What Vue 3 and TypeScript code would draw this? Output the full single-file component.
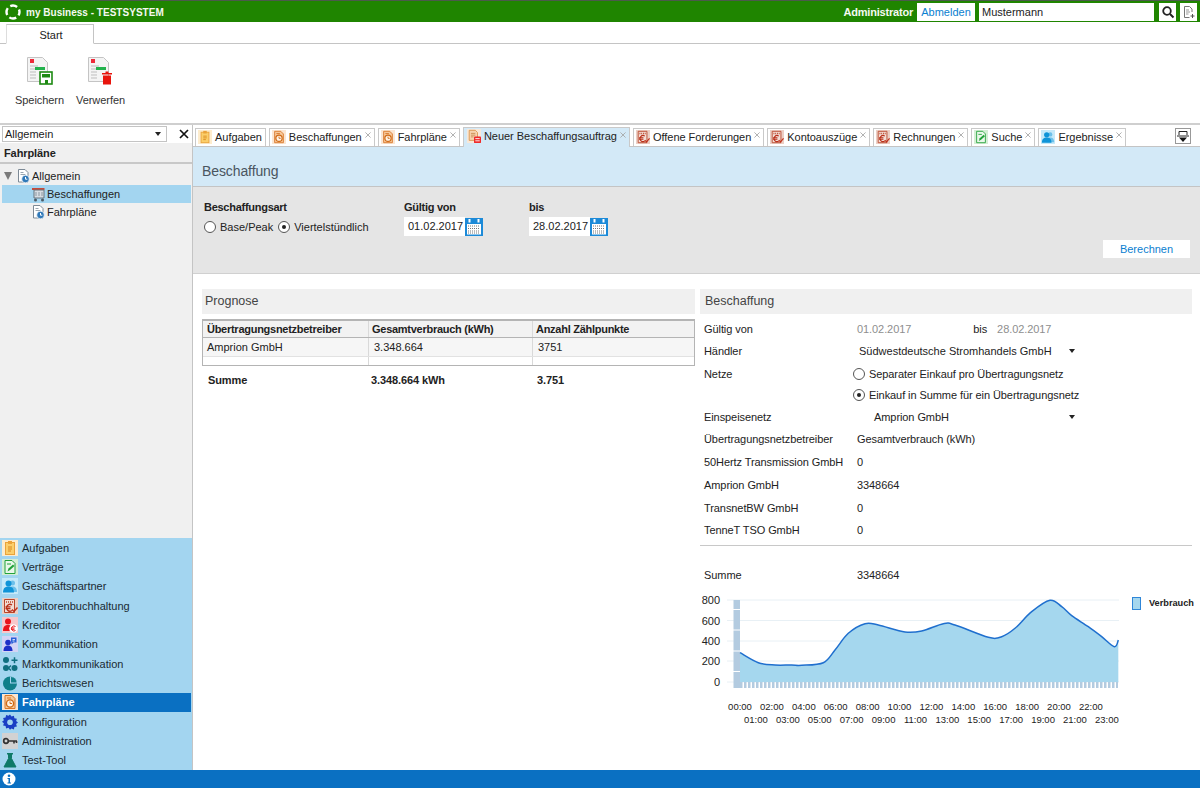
<script setup lang="ts">
const icons: Record<string, string> = {
  task: '<rect width="16" height="16" fill="#fdeccd"/><rect x="3.5" y="2.5" width="9" height="12" fill="#fbcf6b" stroke="#e9a33a"/><rect x="6" y="1" width="4" height="3" fill="#e9a33a"/><path d="M6 7h4M6 9h4M6 11h3" stroke="#d98a1e" fill="none"/>',
  sched: '<rect width="16" height="16" fill="#fbe6d2"/><path d="M3 1.500h7l3 3v10H3z" fill="#f6c89a" stroke="#d9782a"/><circle cx="8" cy="9.500" r="3.600" fill="#fff3e5" stroke="#d06a16" stroke-width="1.400"/><path d="M8 7.500v2h2" stroke="#d06a16" fill="none"/><path d="M5 4h4" stroke="#d9782a"/>',
  neworder: '<rect width="16" height="16" fill="#f8e8d8"/><path d="M2.500 1.500h7l2.500 2.500v9h-9.500z" fill="#f7d3ae" stroke="#d9964f"/><path d="M4.500 5h5M4.500 7h5M4.500 9h3" stroke="#c98a50"/><rect x="8" y="8.500" width="8" height="7.500" rx="1" fill="#ee2a2a"/><path d="M9.500 11h5M9.500 13.500h5" stroke="#fff"/>',
  debit: '<rect width="16" height="16" fill="#eccfc5"/><path d="M2.500 1.500h10v13h-10z" fill="#f3ddd5" stroke="#b9462a"/><path d="M4 4h7" stroke="#b9462a" stroke-width="1.500" stroke-dasharray="1 1"/><path d="M10 7a3.400 3.400 0 1 0 0 5.500M3.500 8.800h5M3.500 10.600h5" stroke="#b9301a" stroke-width="1.300" fill="none"/><path d="M10 11.500l2 2 3.500-4" stroke="#c0301a" stroke-width="1.400" fill="none"/>',
  contract: '<rect width="16" height="16" fill="#d4eed4"/><path d="M3 1.500h7l3 3v10H3z" fill="#eaf7ea" stroke="#23a23a"/><path d="M5 5h4" stroke="#23a23a"/><path d="M5.500 12.500l1-3 4.500-4 1.500 1.500-4.500 4z" fill="#23a23a"/>',
  people: '<rect width="16" height="16" fill="#c5e9f9"/><circle cx="10.500" cy="5" r="2.500" fill="#6cc0ea"/><path d="M6 14c0-4 2-5.500 4.500-5.500S15 10 15 14z" fill="#6cc0ea"/><circle cx="6.500" cy="5.500" r="3" fill="#0f94d8"/><path d="M1 14.500c0-4.500 2.500-6 5.500-6s5.500 1.500 5.500 6z" fill="#0f94d8"/>',
  kred: '<rect width="16" height="16" fill="#f7c7cb"/><circle cx="6" cy="4.500" r="3" fill="#e8141c"/><path d="M1 14c0-4.500 2-6 5-6s5 1.500 5 6z" fill="#e8141c"/><circle cx="11.500" cy="11.500" r="4.300" fill="#fff"/><path d="M13.500 9.500a2.500 2.500 0 1 0 0 4M9 11h3.500M9 12.300h3.500" stroke="#e8141c" fill="none"/>',
  komm: '<rect width="16" height="16" fill="#d3d3f5"/><circle cx="6" cy="6.500" r="2.800" fill="#1c2fc8"/><path d="M1.500 15c0-4 2-5.500 4.500-5.500s4.500 1.500 4.500 5.500z" fill="#1c2fc8"/><path d="M9 1.500h5.500v5h-3l-2 2v-2H9z" fill="#2a60d8"/><path d="M10.500 3.500h2.500M10.500 5h2" stroke="#fff" stroke-width=".8"/>',
  markt: '<circle cx="4" cy="4" r="3" fill="#0f6f80"/><circle cx="4" cy="12" r="3" fill="#0f6f80"/><circle cx="12.500" cy="12" r="3" fill="#0f6f80"/><path d="M9.500 4.200h6M12.500 1.200v6M9 9.500L6.500 12l2.500 2.500" stroke="#0f6f80" stroke-width="1.500" fill="none"/>',
  report: '<circle cx="8" cy="8.500" r="7" fill="#0f7f8a"/><path d="M8 8.500V1.500A7 7 0 0 1 15 8.500z" fill="#a3d5f0"/><path d="M9 7.500V2a6 6 0 0 1 5.500 5.500z" fill="#0f7f8a"/>',
  conf: '<path d="M8 .5l1.500 2 2.400-.8.500 2.500 2.500.5-.8 2.400 2 1.400-2 1.500.8 2.400-2.500.5-.5 2.500-2.400-.8L8 15.800l-1.500-2-2.400.8-.5-2.500-2.500-.5.800-2.400-2-1.500 2-1.400-.8-2.400 2.500-.5.500-2.500 2.400.8z" fill="#1a3fc4"/><circle cx="8" cy="8.200" r="2.800" fill="#a3d5f0"/>',
  key: '<rect width="16" height="16" fill="#d2d2d2"/><circle cx="4" cy="8" r="2.300" fill="none" stroke="#333" stroke-width="1.700"/><path d="M6.500 8H15M12 8v2.500M14.500 8v2" stroke="#333" stroke-width="1.600" fill="none"/>',
  flask: '<path d="M5.500 1.500h5M6.500 1.500v5L2 15h12L9.500 6.500v-5z" fill="#0f7a68" stroke="#0f7a68"/><rect x="5" y="1" width="6" height="1.500" fill="#0f7a68"/>',
  treeDoc: '<path d="M2.500 1.500h6.500l3 3v9.500H2.500z" fill="#fff" stroke="#7d8a96"/><path d="M4.500 4.500h3M4.500 6.500h5" stroke="#9aa6b0"/><circle cx="9.500" cy="11" r="3.800" fill="#2f78b8" stroke="#fff" stroke-width=".7"/><path d="M9.500 9v2.200h1.800" stroke="#fff" fill="none"/>',
  treeCart: '<path d="M1 2h12.500v2H1z" fill="#c64a3a"/><path d="M3 4h10v8H3z" fill="#d7dde3" stroke="#69757f"/><path d="M5 6v4M8 6v4M11 6v4" stroke="#8b97a1"/><circle cx="4.500" cy="14" r="1.500" fill="#4d5963"/><circle cx="11.500" cy="14" r="1.500" fill="#4d5963"/>'
}

const tabs = [
  { label: 'Aufgaben', icon: 'task', close: false },
  { label: 'Beschaffungen', icon: 'sched', close: true },
  { label: 'Fahrpläne', icon: 'sched', close: true },
  { label: 'Neuer Beschaffungsauftrag', icon: 'neworder', close: true, active: true },
  { label: 'Offene Forderungen', icon: 'debit', close: true },
  { label: 'Kontoauszüge', icon: 'debit', close: true },
  { label: 'Rechnungen', icon: 'debit', close: true },
  { label: 'Suche', icon: 'contract', close: true },
  { label: 'Ergebnisse', icon: 'people', close: true }
]

const nav = [
  { label: 'Aufgaben', icon: 'task' },
  { label: 'Verträge', icon: 'contract' },
  { label: 'Geschäftspartner', icon: 'people' },
  { label: 'Debitorenbuchhaltung', icon: 'debit' },
  { label: 'Kreditor', icon: 'kred' },
  { label: 'Kommunikation', icon: 'komm' },
  { label: 'Marktkommunikation', icon: 'markt' },
  { label: 'Berichtswesen', icon: 'report' },
  { label: 'Fahrpläne', icon: 'sched', active: true },
  { label: 'Konfiguration', icon: 'conf' },
  { label: 'Administration', icon: 'key' },
  { label: 'Test-Tool', icon: 'flask' }
]

const grid = [
  { name: '50Hertz Transmission GmbH', val: '0' },
  { name: 'Amprion GmbH', val: '3348664' },
  { name: 'TransnetBW GmbH', val: '0' },
  { name: 'TenneT TSO GmbH', val: '0' }
]

// Curve points in pixels of the chart's own drawing area (page offset 695,585).
const raw: [number, number][] = [
  [135, 203], [190, 233], [240, 240], [290, 240], [320, 241], [385, 233], [420, 195], [460, 145],
  [510, 116], [550, 120], [630, 141], [680, 138], [745, 116], [780, 120], [880, 157], [920, 155],
  [960, 130], [1010, 80], [1065, 46], [1100, 65], [1130, 92], [1180, 125], [1220, 155], [1258, 185], [1270, 165]
]
const pts = raw.map(([x, y]) => [x / 3, y / 3])

function smooth(p: number[][]): string {
  let d = `M${p[0][0]} ${p[0][1]}`
  for (let i = 0; i < p.length - 1; i++) {
    const a = p[Math.max(i - 1, 0)]
    const b = p[i]
    const c = p[i + 1]
    const e = p[Math.min(i + 2, p.length - 1)]
    d += ` C${(b[0] + (c[0] - a[0]) / 6).toFixed(1)} ${(b[1] + (c[1] - a[1]) / 6).toFixed(1)} ${(c[0] - (e[0] - b[0]) / 6).toFixed(1)} ${(c[1] - (e[1] - b[1]) / 6).toFixed(1)} ${c[0].toFixed(1)} ${c[1].toFixed(1)}`
  }
  return d
}
const linePath = smooth(pts)
const areaPath = `${linePath} L${pts[pts.length - 1][0]} 97 L45 97 Z`
const yLabels = [
  { t: '800', y: 15 }, { t: '600', y: 35.5 }, { t: '400', y: 56 }, { t: '200', y: 76 }, { t: '0', y: 97 }
]
const hours = Array.from({ length: 24 }, (_, i) => ({
  t: `${String(i).padStart(2, '0')}:00`,
  x: 45 + i * 15.95,
  y: i % 2 === 0 ? 124.5 : 137.5
}))
</script>

<template>
  <div class="app">
    <header class="top">
      <svg class="logo" viewBox="0 0 16 16">
        <circle cx="8" cy="8" r="6.500" fill="none" stroke="#fff" stroke-width="2.400" stroke-dasharray="7.200 3" stroke-dashoffset="3.600" />
      </svg>
      <span class="brand">my Business - TESTSYSTEM</span>
      <span class="spacer"></span>
      <span class="user">Administrator</span>
      <span class="logout">Abmelden</span>
      <span class="search">Mustermann</span>
      <span class="sq">
        <svg viewBox="0 0 14 14" width="14" height="14"><circle cx="6" cy="6" r="3.800" fill="none" stroke="#222" stroke-width="1.800" /><path d="M9 9l3.500 3.500" stroke="#222" stroke-width="2" /></svg>
      </span>
      <span class="sq">
        <svg viewBox="0 0 14 14" width="14" height="14"><path d="M2.500 1.500h5l2.500 2.500v3M2.500 1.500v11h5" fill="none" stroke="#777" /><path d="M4 5h3M4 7h4M4 9h2.500" stroke="#999" /><path d="M10.500 9v4M8.500 11h4" stroke="#555" /></svg>
      </span>
    </header>

    <div class="tabbar"><div class="start">Start</div></div>

    <div class="ribbon">
      <div class="rbtn">
        <svg class="rico" viewBox="0 0 30 30">
          <path d="M2.500 1.500h15l5 5v19h-20z" fill="#f4f4f4" stroke="#c4c4c4" />
          <rect x="5" y="3" width="4" height="4" fill="#ee2a3a" />
          <path d="M5 10h8M5 13h7M5 16h6M5 19h6M5 22h6" stroke="#bdbdbd" />
          <rect x="10" y="11" width="10" height="3" fill="#22b24c" />
          <rect x="15" y="16" width="12" height="12" fill="#fff" stroke="#1d8a12" stroke-width="1.600" />
          <rect x="17" y="18" width="8" height="3.500" fill="#1d8a12" />
          <rect x="20" y="24" width="3" height="4" fill="#1d8a12" />
        </svg>
        <span>Speichern</span>
      </div>
      <div class="rbtn">
        <svg class="rico" viewBox="0 0 30 30">
          <path d="M2.500 1.500h15l5 5v19h-20z" fill="#f4f4f4" stroke="#c4c4c4" />
          <rect x="5" y="3" width="4" height="4" fill="#ee2a3a" />
          <path d="M5 10h8M5 13h7M5 16h6M5 19h6M5 22h6" stroke="#bdbdbd" />
          <rect x="10" y="11" width="10" height="3" fill="#22b24c" />
          <rect x="16" y="17" width="10" height="1.500" fill="#e8140c" />
          <rect x="19.500" y="15.500" width="3" height="1.500" fill="#e8140c" />
          <rect x="17" y="19.500" width="8" height="9" fill="#e8140c" />
        </svg>
        <span>Verwerfen</span>
      </div>
    </div>

    <div class="main">
      <aside class="side">
        <div class="sidetop">
          <div class="combo"><span>Allgemein</span><i class="caret"></i></div>
          <svg class="x" viewBox="0 0 10 10" width="10" height="10"><path d="M1 1l8 8M9 1l-8 8" stroke="#111" stroke-width="1.700" /></svg>
        </div>
        <div class="sidehead">Fahrpläne</div>
        <div class="tree">
          <div class="node">
            <i class="tri"></i>
            <svg class="ic tree15" viewBox="0 0 16 16" v-html="icons.treeDoc"></svg>
            <span>Allgemein</span>
          </div>
          <div class="node sub sel">
            <svg class="ic" viewBox="0 0 16 16" v-html="icons.treeCart"></svg>
            <span>Beschaffungen</span>
          </div>
          <div class="node sub">
            <svg class="ic" viewBox="0 0 16 16" v-html="icons.treeDoc"></svg>
            <span>Fahrpläne</span>
          </div>
        </div>
        <nav class="nav">
          <div v-for="n in nav" :key="n.label" class="navrow" :class="{ on: n.active }">
            <svg class="ic" viewBox="0 0 16 16" v-html="icons[n.icon]"></svg>
            <span>{{ n.label }}</span>
          </div>
        </nav>
      </aside>

      <section class="work">
        <div class="tabs">
          <div v-for="t in tabs" :key="t.label" class="tab" :class="{ act: t.active, noclose: !t.close }">
            <svg class="tic" viewBox="0 0 16 16" v-html="icons[t.icon]"></svg>
            <span>{{ t.label }}</span>
            <svg v-if="t.close" class="tx" viewBox="0 0 7 7" width="6" height="6"><path d="M.5.500l6 6M6.500.500l-6 6" stroke="#a5a5a5" /></svg>
          </div>
          <span class="spacer"></span>
          <span class="tabmenu">
            <svg viewBox="0 0 14 15" width="14" height="15"><path d="M3 6V2.500h8V6M1 7h12" fill="none" stroke="#222" /><path d="M3 8.500h8L7 13z" fill="#111" /></svg>
          </span>
        </div>

        <div class="page">
          <h1 class="title">Beschaffung</h1>
          <div class="filter">
            <div class="fgrid">
              <div>
                <div class="flabel">Beschaffungsart</div>
                <div class="radios">
                  <i class="radio"></i><span class="r1">Base/Peak</span>
                  <i class="radio on"></i><span>Viertelstündlich</span>
                </div>
              </div>
              <div>
                <div class="flabel">Gültig von</div>
                <div class="date">
                  <span class="dinput">01.02.2017</span>
                  <svg class="cal" viewBox="0 0 18 18" width="18" height="18"><rect width="18" height="18" fill="#1c8ad8" /><rect x="2" y="6" width="14" height="10.500" fill="#fff" /><rect x="3.500" y="1" width="2" height="3.500" fill="#fff" /><rect x="12.500" y="1" width="2" height="3.500" fill="#fff" /><path d="M3 8h12M3 10.500h12M3 13h12M3 15h12" stroke="#777" stroke-dasharray="1 1" /></svg>
                </div>
              </div>
              <div>
                <div class="flabel">bis</div>
                <div class="date">
                  <span class="dinput">28.02.2017</span>
                  <svg class="cal" viewBox="0 0 18 18" width="18" height="18"><rect width="18" height="18" fill="#1c8ad8" /><rect x="2" y="6" width="14" height="10.500" fill="#fff" /><rect x="3.500" y="1" width="2" height="3.500" fill="#fff" /><rect x="12.500" y="1" width="2" height="3.500" fill="#fff" /><path d="M3 8h12M3 10.500h12M3 13h12M3 15h12" stroke="#777" stroke-dasharray="1 1" /></svg>
                </div>
              </div>
            </div>
            <div class="actions"><span class="calc">Berechnen</span></div>
          </div>

          <div class="cols">
            <div class="left">
              <h2 class="sect">Prognose</h2>
              <div class="table">
                <div class="tr th"><span class="first">Übertragungsnetzbetreiber</span><span>Gesamtverbrauch (kWh)</span><span>Anzahl Zählpunkte</span></div>
                <div class="tr td"><span class="first">Amprion GmbH</span><span class="in">3.348.664</span><span class="in">3751</span></div>
                <div class="tr empty"><span></span><span></span><span></span></div>
              </div>
              <div class="tr sum"><span class="in2">Summe</span><span>3.348.664 kWh</span><span class="in">3.751</span></div>
            </div>

            <div class="right">
              <h2 class="sect">Beschaffung</h2>
              <div class="form rows">
                <span>Gültig von</span>
                <span class="dates"><em class="grey">01.02.2017</em><span class="bis">bis</span><em class="grey">28.02.2017</em></span>
                <span>Händler</span>
                <span class="sel1">Südwestdeutsche Stromhandels GmbH<i class="caret a"></i></span>
                <span>Netze</span>
                <span class="opt"><i class="radio"></i>Separater Einkauf pro Übertragungsnetz</span>
                <span></span>
                <span class="opt"><i class="radio on"></i>Einkauf in Summe für ein Übertragungsnetz</span>
                <span>Einspeisenetz</span>
                <span class="sel2">Amprion GmbH<i class="caret b"></i></span>
                <span>Übertragungsnetzbetreiber</span>
                <span>Gesamtverbrauch (kWh)</span>
                <template v-for="g in grid" :key="g.name">
                  <span>{{ g.name }}</span>
                  <span>{{ g.val }}</span>
                </template>
              </div>
              <div class="rule"></div>
              <div class="form total"><span>Summe</span><span>3348664</span></div>
              <svg class="chart" viewBox="0 0 505 150" width="505" height="150">
                <defs>
                  <pattern id="ticks" x="45" width="4" height="6" patternUnits="userSpaceOnUse"><rect width="2.500" height="6" fill="#b3cbe0" /></pattern>
                </defs>
                <path v-for="l in yLabels" :key="'g' + l.t" :d="`M32 ${l.y}H424`" stroke="#e8f0f5" />
                <rect x="38.500" y="15" width="6.500" height="88" fill="#b3cbe0" />
                <path d="M38 24.500h8M38 45h8M38 66h8M38 86.500h8" stroke="#fff" />
                <rect x="45" y="97" width="378" height="6" fill="url(#ticks)" />
                <path :d="areaPath" fill="#a5d7ee" />
                <path :d="linePath" fill="none" stroke="#1f6fce" stroke-width="1.500" />
                <text v-for="l in yLabels" :key="l.t" x="25" :y="l.y + 4" text-anchor="end" class="yl">{{ l.t }}</text>
                <text v-for="h in hours" :key="h.t" :x="h.x" :y="h.y" text-anchor="middle" class="xl">{{ h.t }}</text>
                <rect x="437.500" y="12.500" width="8" height="12" fill="#a5d7ee" stroke="#2f86d8" />
                <text x="454" y="21" class="lg">Verbrauch</text>
              </svg>
            </div>
          </div>
        </div>
      </section>
    </div>

    <footer class="foot">
      <svg viewBox="0 0 14 14" width="14" height="14"><circle cx="7" cy="7" r="6.500" fill="#fff" /><circle cx="7" cy="3.700" r="1.300" fill="#0a70c2" /><path d="M5.500 6h2.500v4.500h1v1H5.500v-1h1V7h-1z" fill="#0a70c2" /></svg>
    </footer>
  </div>
</template>

<style scoped>
.app { width: 1200px; height: 788px; display: flex; flex-direction: column; overflow: hidden; background: #fff; font: 11px "Liberation Sans", Arial, sans-serif; color: #222; }
.top { height: 22px; box-sizing: border-box; background: #1f8500; border-top: 1px solid #4b5a4b; display: flex; align-items: center; padding: 1px 3px 0 5px; flex: none; gap: 4px; }
.logo { width: 16px; height: 16px; margin-right: 1px; }
.brand { color: #f5f9f1; font-weight: bold; font-size: 10px; letter-spacing: .02px; }
.spacer { flex: 1; }
.user { color: #f5f9f1; font-weight: bold; letter-spacing: -.2px; }
.logout { background: #fff; color: #0a80d0; height: 18px; width: 58px; line-height: 18px; text-align: center; }
.search { background: #fff; width: 175px; height: 18px; line-height: 18px; padding-left: 3px; box-sizing: border-box; margin-right: 1px; }
.sq { background: #fff; width: 17px; height: 18px; display: flex; align-items: center; justify-content: center; }
.tabbar { height: 22px; box-sizing: border-box; border-bottom: 1px solid #c4c4c4; padding: 2px 0 0 6px; flex: none; }
.start { width: 88px; height: 20px; box-sizing: border-box; border: 1px solid #c4c4c4; border-bottom: 1px solid #fff; border-left-color: #ddd; text-align: center; line-height: 20px; font-size: 11px; background: #fff; padding-left: 2px; }
.ribbon { height: 81px; box-sizing: border-box; border-bottom: 2px solid #cfcfcf; display: flex; padding: 12px 0 0 15px; gap: 12px; flex: none; }
.rbtn { width: 49px; display: flex; flex-direction: column; align-items: center; font-size: 11px; color: #333; gap: 8px; white-space: nowrap; letter-spacing: -.05px; }
.rico { width: 30px; height: 30px; }
.main { flex: 1; display: flex; min-height: 0; }
.side { width: 193px; flex: none; display: flex; flex-direction: column; background: #f0f0f0; border-right: 1px solid #c4c4c4; box-sizing: border-box; }
.sidetop { height: 18px; background: #fff; display: flex; align-items: center; padding: 0 0 0 1px; box-sizing: border-box; flex: none; }
.combo { width: 165px; height: 16px; box-sizing: border-box; border: 1px solid #c4c4c4; background: #fff; display: flex; align-items: center; justify-content: space-between; padding: 0 5px 0 2px; margin-left: 1px; }
.caret { width: 0; height: 0; border-left: 3.500px solid transparent; border-right: 3.500px solid transparent; border-top: 4px solid #222; display: inline-block; }
.x { margin-left: 12px; }
.sidehead { height: 21px; box-sizing: border-box; line-height: 20px; font-weight: bold; padding-left: 4px; border-bottom: 2px solid #c8c8c8; flex: none; letter-spacing: -.1px; }
.tree { flex: 1; padding: 3px 1px 0 2px; }
.node { height: 18px; display: flex; align-items: center; white-space: nowrap; }
.tri { width: 0; height: 0; border-left: 4px solid transparent; border-right: 4px solid transparent; border-top: 8px solid #7b7b7b; margin: 0 4px 0 2px; }
.tree15 { width: 15px; }
.sub { padding-left: 29px; }
.sel { background: #a3d5f0; }
.ic { width: 16px; height: 16px; flex: none; }
.tic { width: 14px; height: 14px; flex: none; }
.nav { height: 232px; background: #a3d5f0; display: grid; grid-auto-rows: 1fr; padding-right: 1px; flex: none; }
.navrow { display: flex; align-items: center; padding-left: 2px; gap: 4px; color: #1a2a33; }
.navrow.on { background: #0a70c2; color: #fff; font-weight: bold; }
.work { flex: 1; min-width: 0; display: flex; flex-direction: column; }
.tabs { height: 22px; box-sizing: border-box; display: flex; align-items: flex-end; padding-left: 2px; gap: 3px; border-bottom: 1px solid #c4c4c4; flex: none; padding-right: 9px; }
.tab { height: 18px; box-sizing: border-box; border: 1px solid #c9c9c9; border-bottom: none; display: flex; align-items: center; padding: 0 3px 2px 2px; gap: 3px; white-space: nowrap; background: #fff; color: #222; letter-spacing: -.03px; }
.tab.noclose { padding-right: 3px; }
.tab .tx { align-self: flex-start; margin-top: 3px; }
.tab.act { background: #d3e9f7; height: 20px; margin-bottom: -1px; padding: 0 3px 3px 3px; }
.tab.act .tx { margin-top: 4px; }
.tabmenu { width: 16px; height: 16px; border: 1px solid #999; box-sizing: border-box; display: flex; align-items: center; justify-content: center; align-self: flex-start; margin-top: 3px; overflow: hidden; }
.page { flex: 1; min-height: 0; display: flex; flex-direction: column; }
.title { margin: 0; height: 40px; box-sizing: border-box; background: #d3e9f7; border-bottom: 1px solid #c4c4c4; font-size: 14px; font-weight: normal; color: #4a5560; padding: 0 0 0 9px; line-height: 48px; flex: none; letter-spacing: -.1px; }
.filter { height: 87px; box-sizing: border-box; background: #e5e5e5; border-bottom: 1px solid #d0d0d0; padding: 14px 10px 0 11px; flex: none; display: flex; flex-direction: column; }
.fgrid { display: grid; grid-template-columns: 200px 125px 1fr; }
.flabel { font-weight: bold; line-height: 13px; margin-bottom: 3px; letter-spacing: -.27px; }
.radios { display: flex; align-items: center; height: 19px; white-space: nowrap; }
.radio { width: 12px; height: 12px; border: 1px solid #555; border-radius: 50%; background: #fff; box-sizing: border-box; display: inline-block; flex: none; position: relative; margin-right: 4px; }
.radio.on::after { content: ""; position: absolute; left: 3px; top: 3px; width: 4px; height: 4px; border-radius: 50%; background: #222; }
.r1 { margin-right: 5px; }
.date { display: flex; align-items: center; height: 19px; }
.dinput { background: #fff; width: 61px; height: 19px; line-height: 19px; padding-left: 4px; box-sizing: border-box; }
.actions { display: flex; justify-content: flex-end; margin-top: 4px; padding-right: 0; }
.calc { background: #fff; color: #0a80d0; width: 87px; height: 18px; line-height: 18px; text-align: center; }
.cols { flex: 1; display: flex; padding: 15px 8px 0 9px; gap: 5px; min-height: 0; }
.left { width: 493px; flex: none; }
.right { flex: 1; min-width: 0; }
.sect { margin: 0; height: 25px; line-height: 25px; background: #f0f0f0; font-size: 12.500px; font-weight: normal; color: #444; padding-left: 3px; }
.right .sect { padding-left: 5px; }
.table { margin-top: 5px; border: 1px solid #b4b4b4; border-width: 2px 1px 1px 1px; }
.tr { display: grid; grid-template-columns: 165px 164px 1fr; }
.tr span { padding-left: 3px; }
.tr .first { padding-left: 4px; }
.th { height: 16px; line-height: 16px; background: #f2f2f2; font-weight: bold; border-bottom: 1px solid #b4b4b4; letter-spacing: -.27px; }
.th span + span, .td span + span, .empty span + span { border-left: 1px solid #d9d9d9; }
.td { height: 18px; line-height: 18px; background: #f6f6f6; border-bottom: 1px solid #e2e2e2; }
.empty { height: 8px; }
.tr .in { padding-left: 5px; }
.tr .in2 { padding-left: 6px; }
.sum { margin-top: 8px; font-weight: bold; line-height: 13px; grid-template-columns: 166px 164px 1fr; letter-spacing: -.1px; }
.form { display: grid; grid-template-columns: 153px 1fr; grid-auto-rows: 22.350px; align-items: center; padding-left: 4px; margin-top: 3px; letter-spacing: -.08px; }
.form.rows { grid-template-rows: 23px 22.500px 22px 21.500px 21.500px 22.500px 23px 23px 23px 22px; }
.dates { display: flex; }
.grey { font-style: normal; color: #8e8e8e; }
.bis { margin-left: 62px; margin-right: 10px; }
.sel1 { padding-left: 2px; position: relative; letter-spacing: 0; }
.sel2 { padding-left: 17px; position: relative; }
.caret.a, .caret.b { position: absolute; left: 212px; top: 4px; }
.opt { display: flex; align-items: center; margin-left: -4px; white-space: nowrap; }
.opt .radio { margin-right: 4px; }
.rule { margin-top: 3.500px; height: 1px; background: #c8c8c8; }
.total { margin-top: 18px; }
.chart { display: block; margin: -1px 0 0 -5px; overflow: visible; }
.yl { font: 11px "Liberation Sans", Arial, sans-serif; fill: #222; }
.xl { font: 9.500px "Liberation Sans", Arial, sans-serif; fill: #222; }
.lg { font: bold 9.200px "Liberation Sans", Arial, sans-serif; fill: #222; }
.foot { height: 18px; background: #0a70c2; display: flex; align-items: center; padding-left: 2px; flex: none; }
</style>

<style>
html, body { margin: 0; padding: 0; background: #fff; }
</style>
